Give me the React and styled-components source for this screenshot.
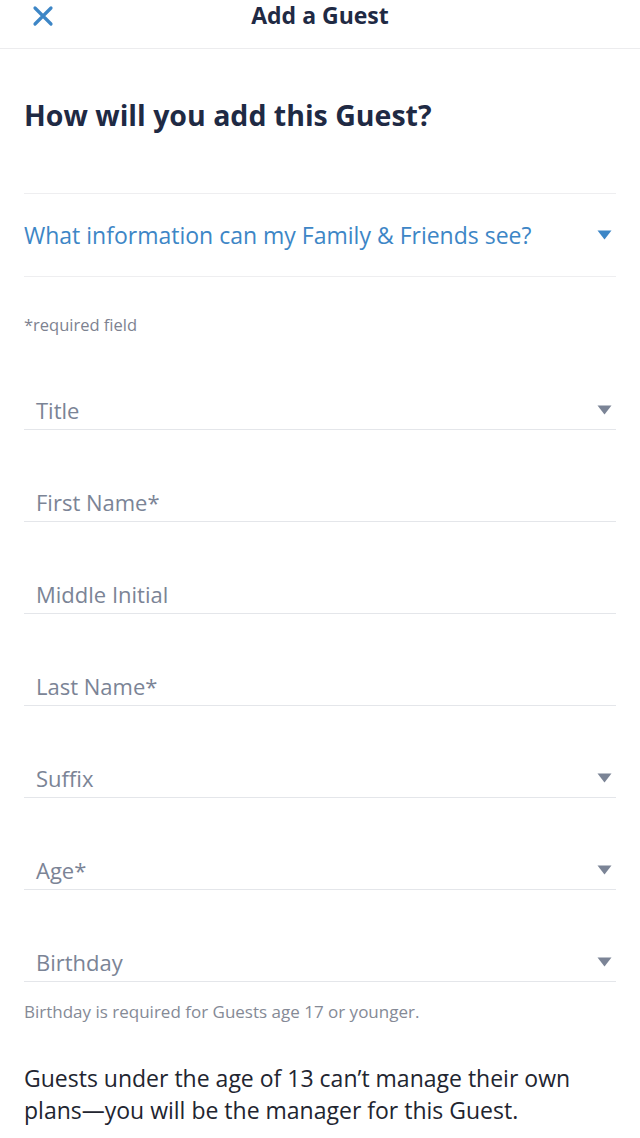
import React from "react";
import styled, { createGlobalStyle } from "styled-components";

const Global = createGlobalStyle`
  html, body { margin: 0; padding: 0; background: #fff; }
  body { font-family: "Open Sans", "Noto Sans", sans-serif; -webkit-font-smoothing: antialiased; }
`;

const Page = styled.div`
  width: 640px;
  min-height: 1138px;
  background: #fff;
  overflow: hidden;
`;

const Header = styled.header`
  position: relative;
  height: 48px;
  display: flex;
  align-items: flex-start;
  justify-content: center;
  border-bottom: 1px solid #ececee;
`;

const HeaderTitle = styled.h1`
  margin: 0;
  padding-top: 0;
  font-size: 23px;
  line-height: 30px;
  font-weight: 700;
  color: #1f2a44;
`;

const CloseButton = styled.button`
  position: absolute;
  left: 30px;
  top: 3px;
  width: 26px;
  height: 26px;
  padding: 0;
  border: 0;
  background: none;
  display: flex;
  align-items: center;
  justify-content: center;
`;

const Content = styled.main`
  padding: 0 24px;
`;

const Heading = styled.h2`
  margin: 0;
  padding-top: 48px;
  font-size: 28.5px;
  line-height: 36px;
  font-weight: 700;
  color: #1f2a44;
`;

const Disclosure = styled.div`
  margin-top: 60px;
  height: 82px;
  border-top: 1px solid #eeeef0;
  border-bottom: 1px solid #eeeef0;
  display: flex;
  align-items: center;
  justify-content: space-between;
  padding-right: 4px;
`;

const LinkText = styled.span`
  font-size: 23px;
  line-height: 30px;
  color: #3d86c6;
`;

const Required = styled.p`
  margin: 38px 0 0;
  font-size: 16.5px;
  line-height: 20px;
  color: #7d8290;
`;

const Field = styled.div`
  height: ${(p) => (p.$first ? 95 : 92)}px;
  border-bottom: 1.5px solid #e4e6ea;
  display: flex;
  flex-direction: column;
  justify-content: flex-end;
  box-sizing: border-box;
`;

const FieldRow = styled.div`
  height: 38px;
  display: flex;
  align-items: center;
  justify-content: space-between;
  padding: 0 4px 0 12px;
`;

const FieldLabel = styled.span`
  font-size: 22px;
  line-height: 28px;
  color: #7b8496;
`;

const Helper = styled.p`
  margin: 20px 0 0;
  font-size: 17px;
  line-height: 20px;
  color: #858a96;
`;

const Note = styled.p`
  margin: 40px 0 0;
  font-size: 23px;
  line-height: 32px;
  color: #222530;
`;

const Caret = ({ color }) => (
  <svg width="15" height="10" viewBox="0 0 15 10">
    <path d="M0.5 0.5 H14.5 L7.5 9.5 Z" fill={color} />
  </svg>
);

const fields = [
  { label: "Title", select: true },
  { label: "First Name*" },
  { label: "Middle Initial" },
  { label: "Last Name*" },
  { label: "Suffix", select: true },
  { label: "Age*", select: true },
  { label: "Birthday", select: true },
];

export default function App() {
  return (
    <Page>
      <Global />
      <Header>
        <CloseButton aria-label="Close">
          <svg width="22" height="22" viewBox="0 0 22 22">
            <path d="M3 3 L19 19 M19 3 L3 19" stroke="#3d86c6" strokeWidth="3.2" strokeLinecap="round" />
          </svg>
        </CloseButton>
        <HeaderTitle>Add a Guest</HeaderTitle>
      </Header>
      <Content>
        <Heading>How will you add this Guest?</Heading>
        <Disclosure>
          <LinkText>What information can my Family &amp; Friends see?</LinkText>
          <Caret color="#3d86c6" />
        </Disclosure>
        <Required>*required field</Required>
        {fields.map((f, i) => (
          <Field key={f.label} $first={i === 0}>
            <FieldRow>
              <FieldLabel>{f.label}</FieldLabel>
              {f.select && <Caret color="#7b8496" />}
            </FieldRow>
          </Field>
        ))}
        <Helper>Birthday is required for Guests age 17 or younger.</Helper>
        <Note>Guests under the age of 13 can’t manage their own plans—you will be the manager for this Guest.</Note>
      </Content>
    </Page>
  );
}
